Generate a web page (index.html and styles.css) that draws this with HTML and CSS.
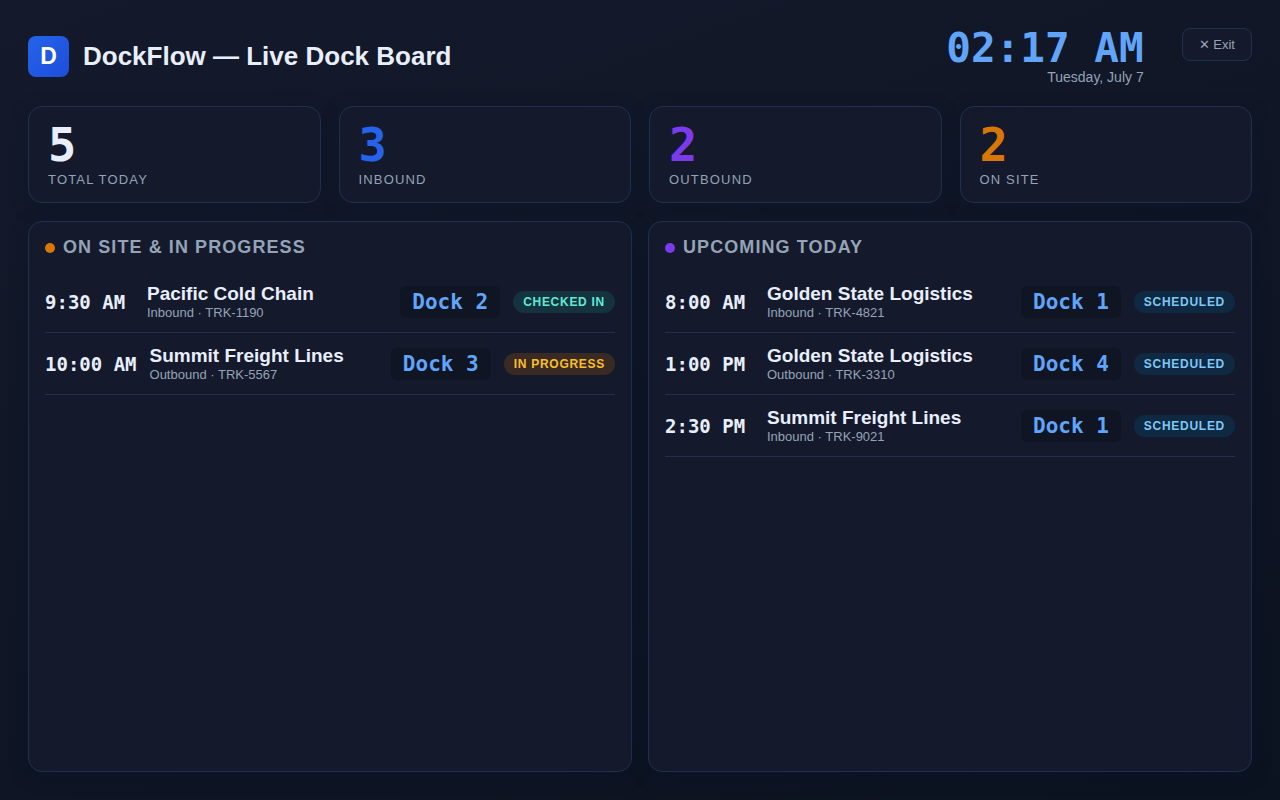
FILE: index.html
```html
<!DOCTYPE html>
<html lang="en">
<head>
<meta charset="utf-8">
<meta name="viewport" content="width=device-width, initial-scale=1">
<title>DockFlow — Live Dock Board</title>
<link rel="stylesheet" href="styles.css">
</head>
<body>
<div class="board">
  <header class="header">
    <div class="brand">
      <div class="logo">D</div>
      <h1 class="title">DockFlow — Live Dock Board</h1>
    </div>
    <div class="clock">
      <time class="clock-time">02:17 AM</time>
      <span class="clock-date">Tuesday, July 7</span>
    </div>
    <button class="exit" type="button">✕ Exit</button>
  </header>

  <section class="stats">
    <div class="card stat"><div class="value">5</div><div class="label">Total today</div></div>
    <div class="card stat"><div class="value inbound">3</div><div class="label">Inbound</div></div>
    <div class="card stat"><div class="value outbound">2</div><div class="label">Outbound</div></div>
    <div class="card stat"><div class="value onsite">2</div><div class="label">On site</div></div>
  </section>

  <main class="panels">
    <section class="card panel">
      <h2 class="heading"><span class="dot dot-onsite"></span>On site &amp; in progress</h2>
      <ul class="list">
        <li class="row">
          <time class="time">9:30 AM</time>
          <div class="info"><div class="carrier">Pacific Cold Chain</div><div class="detail">Inbound · TRK-1190</div></div>
          <span class="dock">Dock 2</span>
          <span class="status checked-in">Checked in</span>
        </li>
        <li class="row">
          <time class="time">10:00 AM</time>
          <div class="info"><div class="carrier">Summit Freight Lines</div><div class="detail">Outbound · TRK-5567</div></div>
          <span class="dock">Dock 3</span>
          <span class="status in-progress">In progress</span>
        </li>
      </ul>
    </section>
    <section class="card panel">
      <h2 class="heading"><span class="dot dot-upcoming"></span>Upcoming today</h2>
      <ul class="list">
        <li class="row">
          <time class="time">8:00 AM</time>
          <div class="info"><div class="carrier">Golden State Logistics</div><div class="detail">Inbound · TRK-4821</div></div>
          <span class="dock">Dock 1</span>
          <span class="status scheduled">Scheduled</span>
        </li>
        <li class="row">
          <time class="time">1:00 PM</time>
          <div class="info"><div class="carrier">Golden State Logistics</div><div class="detail">Outbound · TRK-3310</div></div>
          <span class="dock">Dock 4</span>
          <span class="status scheduled">Scheduled</span>
        </li>
        <li class="row">
          <time class="time">2:30 PM</time>
          <div class="info"><div class="carrier">Summit Freight Lines</div><div class="detail">Inbound · TRK-9021</div></div>
          <span class="dock">Dock 1</span>
          <span class="status scheduled">Scheduled</span>
        </li>
      </ul>
    </section>
  </main>
</div>
</body>
</html>
```
FILE: styles.css
```css
:root {
  --text: #e8eefc;
  --muted: #94a3b8;
  --accent: #60a5fa;
  --surface: #141a2b;
  --line: #20304e;
  --mono: "DejaVu Sans Mono", monospace;
}

* { box-sizing: border-box; }

body {
  margin: 0;
  font-family: "Liberation Sans", Arial, sans-serif;
  color: var(--text);
  background: linear-gradient(160deg, #141a2b, #0b1220);
  background-attachment: fixed;
}

.board {
  min-height: 100vh;
  padding: 28px;
  display: flex;
  flex-direction: column;
}

.header {
  display: flex;
  align-items: center;
  margin-bottom: 21px;
}

.brand {
  flex: 1;
  display: flex;
  align-items: center;
  gap: 14px;
}

.logo {
  width: 41px;
  height: 41px;
  border-radius: 8px;
  display: grid;
  place-items: center;
  background: linear-gradient(135deg, #2563eb, #1d4ed8);
  color: #fff;
  font-size: 23px;
  font-weight: 700;
}

.title {
  margin: 0;
  font-size: 26px;
  line-height: 29px;
}

.clock {
  display: flex;
  flex-direction: column;
  align-items: flex-end;
}

.clock-time {
  font: 700 41px/41px var(--mono);
  color: var(--accent);
}

.clock-date {
  font-size: 14px;
  line-height: 16px;
  color: var(--muted);
}

.exit {
  align-self: flex-start;
  margin-left: 38px;
  padding: 8px 16px;
  border: 1px solid var(--line);
  border-radius: 8px;
  background: var(--surface);
  color: var(--muted);
  font: 13px/15px "Liberation Sans", Arial, sans-serif;
}

.card {
  background: var(--surface);
  border: 1px solid var(--line);
  border-radius: 14px;
  box-shadow: 0 4px 16px rgba(8, 22, 42, 0.5);
}

.stats {
  display: grid;
  grid-template-columns: repeat(4, 1fr);
  gap: 18px;
  margin-bottom: 18px;
}

.stat { padding: 14px 19px 15px; }

.value {
  font: 700 47px/48px var(--mono);
}

.inbound { color: #2563eb; }
.outbound { color: #7c3aed; }
.onsite { color: #d97706; }

.label {
  margin-top: 3px;
  font-size: 13px;
  line-height: 15px;
  letter-spacing: 0.09em;
  text-transform: uppercase;
  color: var(--muted);
}

.panels {
  flex: 1;
  display: grid;
  grid-template-columns: 1fr 1fr;
  gap: 16px;
}

.panel { padding: 15px 16px; }

.heading {
  margin: 0 0 13px;
  display: flex;
  align-items: center;
  gap: 8px;
  font-size: 18px;
  line-height: 21px;
  letter-spacing: 0.06em;
  text-transform: uppercase;
  color: var(--muted);
}

.dot {
  width: 10px;
  height: 10px;
  border-radius: 50%;
}

.dot-onsite { background: #d97706; }
.dot-upcoming { background: #7c3aed; }

.list {
  margin: 0;
  padding: 0;
  list-style: none;
}

.row {
  display: flex;
  align-items: center;
  gap: 13px;
  padding: 11px 0;
  border-bottom: 1px solid var(--line);
}

.time {
  min-width: 89px;
  font: 700 19px/22px var(--mono);
}

.info { flex: 1; }

.carrier {
  font-size: 19px;
  font-weight: 700;
  line-height: 23px;
}

.detail {
  font-size: 13px;
  line-height: 16px;
  color: var(--muted);
}

.dock {
  padding: 4px 12px;
  border-radius: 6px;
  background: #0f1523;
  color: var(--accent);
  font: 700 21px/24px var(--mono);
}

.status {
  padding: 4px 10px;
  border-radius: 11px;
  font-size: 12px;
  font-weight: 700;
  line-height: 14px;
  letter-spacing: 0.06em;
  text-transform: uppercase;
}

.checked-in { background: #15323f; color: #5eead4; }
.in-progress { background: #392b24; color: #fbbf24; }
.scheduled { background: #0f2942; color: #7dc8f5; }
```
